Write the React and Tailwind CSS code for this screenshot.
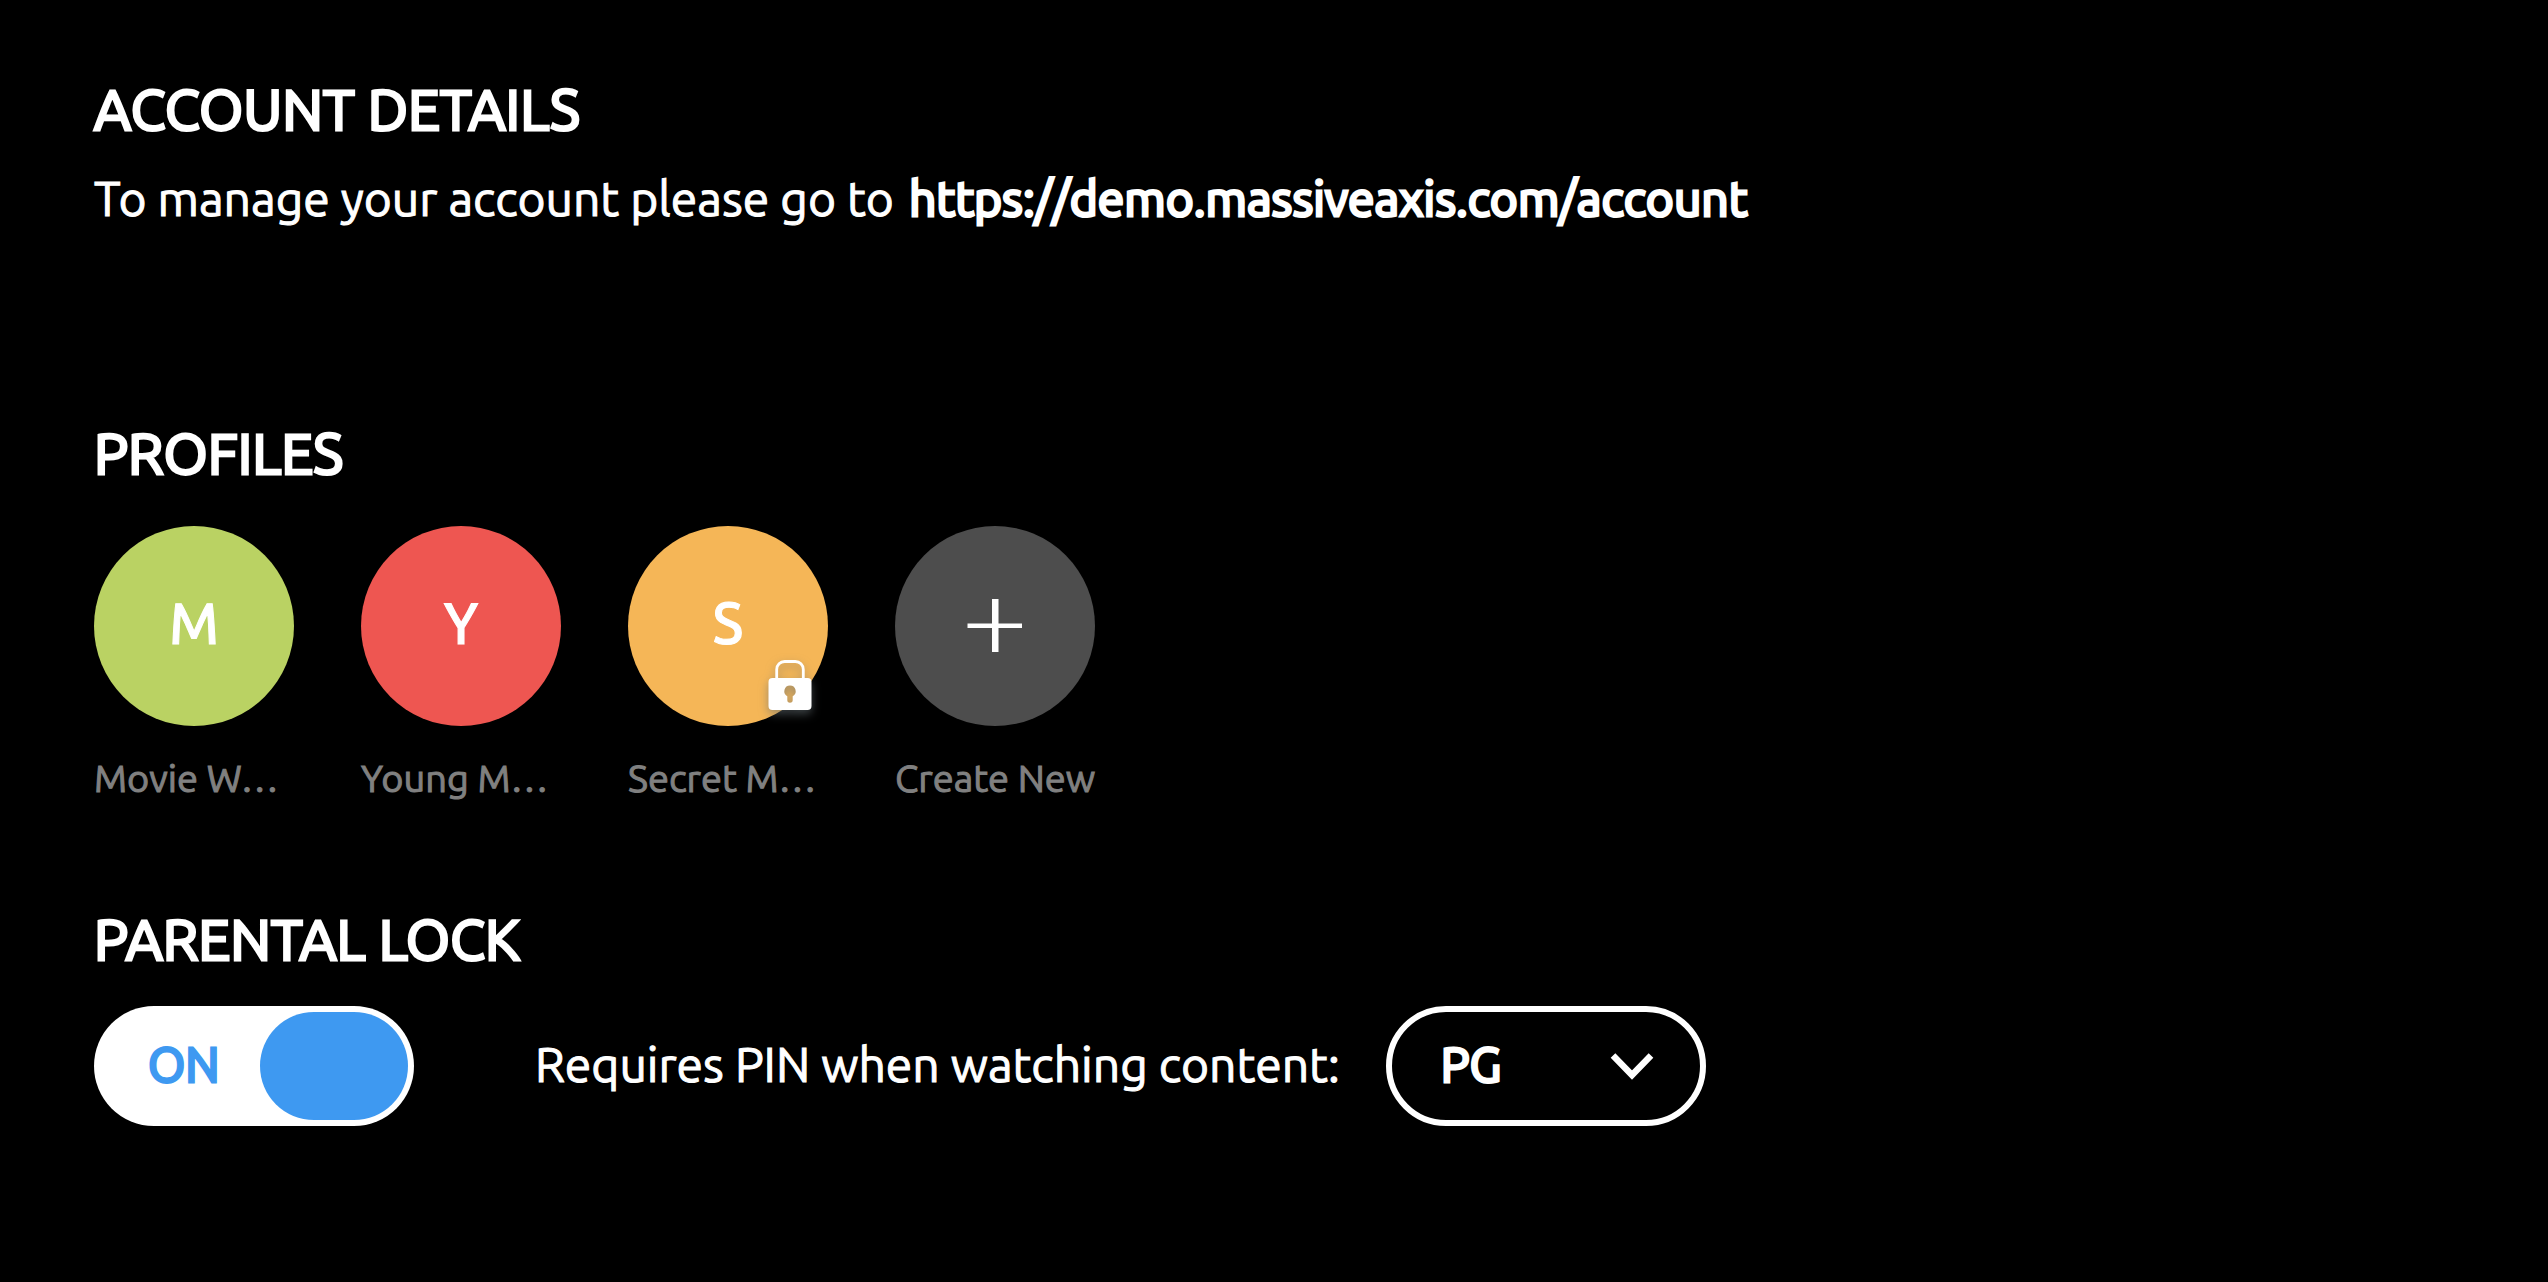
import React, { useState } from 'react';

const profiles = [
  { name: 'Movie W…', initial: 'M', color: 'bg-[#bad263]', locked: false },
  { name: 'Young M…', initial: 'Y', color: 'bg-[#ee5651]', locked: false },
  { name: 'Secret M…', initial: 'S', color: 'bg-[#f5b657]', locked: true },
];

const LockBadge = () => (
  <svg
    className="absolute right-4 bottom-4 h-[50px] w-11 drop-shadow-[0_4px_5px_rgba(100,110,115,0.6)]"
    viewBox="0 0 44 50"
    fill="none"
    aria-label="Locked"
  >
    <path
      d="M8.7 20V9.5a8 8 0 0 1 8-8h10.6a8 8 0 0 1 8 8V20"
      stroke="#fff"
      strokeWidth="2.8"
    />
    <path
      fill="#fff"
      fillRule="evenodd"
      d="M4.5 18h35a4 4 0 0 1 4 4v24a4 4 0 0 1-4 4h-35a4 4 0 0 1-4-4V22a4 4 0 0 1 4-4ZM22 25.500a5.7 5.7 0 0 0-2.7 10.7V40a2.7 2.7 0 0 0 5.4 0v-3.8A5.7 5.7 0 0 0 22 25.500Z"
    />
  </svg>
);

const SectionTitle = ({ children }) => (
  <h2 className="text-[57px] leading-[72px] [-webkit-text-stroke:3px_currentColor]">
    {children}
  </h2>
);

const Profile = ({ name, color, children }) => (
  <li>
    <button
      type="button"
      className="flex w-[200px] cursor-pointer flex-col items-start gap-7 text-left"
    >
      <span
        className={`relative flex size-[200px] items-center justify-center rounded-full ${color}`}
      >
        {children}
      </span>
      <span className="text-[38px] leading-[48px] whitespace-nowrap text-[#808080] [-webkit-text-stroke:1px_currentColor]">
        {name}
      </span>
    </button>
  </li>
);

export default function App() {
  const [lockOn, setLockOn] = useState(true);
  const [rating, setRating] = useState('PG');

  return (
    <main className="min-h-screen bg-black px-[94px] pt-[73px] pb-20 font-['Ubuntu','Noto_Sans',sans-serif] text-white">
      {/* Account */}
      <section className="flex flex-col gap-[21px]">
        <SectionTitle>ACCOUNT DETAILS</SectionTitle>
        <p className="text-[48px] leading-[64px] [-webkit-text-stroke:1px_currentColor]">
          To manage your account please go to{' '}
          <a
            href="https://demo.massiveaxis.com/account"
            className="ml-1 [-webkit-text-stroke:3px_currentColor]"
          >
            https://demo.massiveaxis.com/account
          </a>
        </p>
      </section>

      {/* Profiles */}
      <section className="mt-[187px] flex flex-col gap-[37px]">
        <SectionTitle>PROFILES</SectionTitle>
        <ul className="flex gap-[67px]">
          {profiles.map((profile) => (
            <Profile key={profile.name} name={profile.name} color={profile.color}>
              <span className="pb-1 text-[57px] font-medium [-webkit-text-stroke:1px_currentColor]">
                {profile.initial}
              </span>
              {profile.locked && <LockBadge />}
            </Profile>
          ))}
          <Profile name="Create New" color="bg-[#4d4d4d]">
            <svg className="size-14" viewBox="0 0 56 56" fill="#fff" aria-hidden="true">
              <path d="M0.5 25.5h24.500V1h6.500v24.500H55v4.500H31.500v24H25V30H0.500Z" />
            </svg>
          </Profile>
        </ul>
      </section>

      {/* Parental lock */}
      <section className="mt-[101px] flex flex-col gap-[31px]">
        <SectionTitle>PARENTAL LOCK</SectionTitle>
        <div className="flex items-center text-[48px] leading-[64px]">
          <label className="flex h-[120px] w-[320px] cursor-pointer items-center justify-between rounded-full bg-white p-1.5 pl-[54px] text-[#3e99f1]">
            <input
              type="checkbox"
              aria-label="Parental lock"
              className="sr-only"
              checked={lockOn}
              onChange={(e) => setLockOn(e.target.checked)}
            />
            <span className="pb-1 [-webkit-text-stroke:3px_currentColor]">
              {lockOn ? 'ON' : 'OFF'}
            </span>
            <span className="h-full w-[148px] rounded-full bg-[#3e99f1]" />
          </label>
          <label
            htmlFor="rating"
            className="ml-[121px] pb-1 [-webkit-text-stroke:1px_currentColor]"
          >
            Requires PIN when watching content:
          </label>
          <div className="relative ml-[46px]">
            <select
              id="rating"
              value={rating}
              onChange={(e) => setRating(e.target.value)}
              className="h-[120px] w-[320px] cursor-pointer appearance-none rounded-full border-[6px] border-white bg-black pb-1 pl-[49px] [-webkit-text-stroke:3px_currentColor]"
            >
              <option>G</option>
              <option>PG</option>
              <option>M</option>
              <option>R</option>
            </select>
            <svg
              className="pointer-events-none absolute top-[46px] right-[52px] h-7 w-11"
              viewBox="0 0 44 28"
              fill="none"
              stroke="#fff"
              strokeWidth="6.5"
              aria-hidden="true"
            >
              <path d="M3 3.5 22 23 41 3.5" />
            </svg>
          </div>
        </div>
      </section>
    </main>
  );
}
